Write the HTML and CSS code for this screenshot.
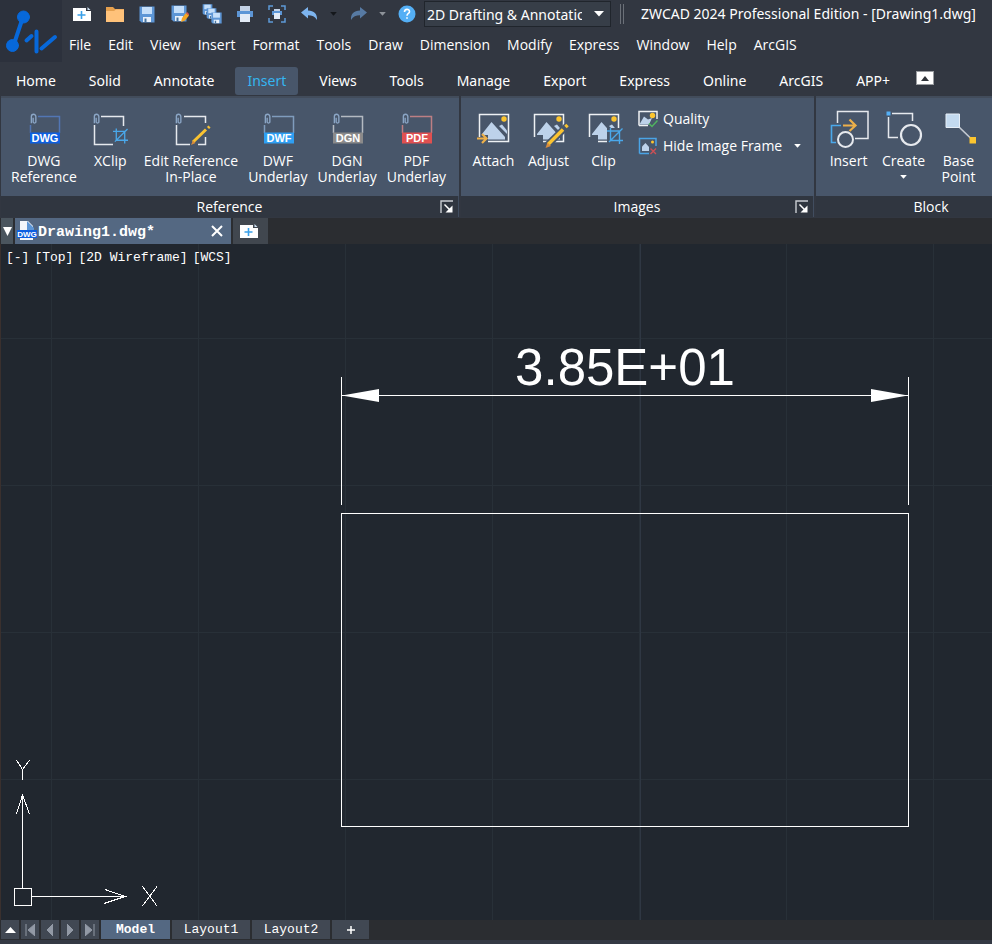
FILE: index.html
```html
<!DOCTYPE html>
<html lang="en">
<head>
<meta charset="utf-8">
<title>ZWCAD 2024 Professional Edition - [Drawing1.dwg]</title>
<link rel="stylesheet" href="styles.css">
</head>
<body>
<svg class="defs" aria-hidden="true">
  <symbol id="clip" viewBox="0 0 10 16"><path d="M1.5 4V11M1.5 5V3.5A2.5 2.5 0 0 1 6.500 3.500V10A1.700 1.700 0 0 1 3.500 10V5" fill="none" stroke="#8ba6c6" stroke-width="1.500"/></symbol>
  <symbol id="crop" viewBox="0 0 16 16"><path d="M3.500 0V12.500H16M0 3H12.500V16M2 14L15.500 .5" fill="none" stroke="#4aa8ea" stroke-width="1.400"/></symbol>
  <symbol id="disk" viewBox="0 0 16 17"><path d="M.5.5H15.500V16.500H2.500L.5 14.500Z" fill="#5d96d6"/><path d="M3 1H13V8H3Z" fill="#c5dffa"/><path d="M4 11H12V16H4Z" fill="#e9f1fb"/><path d="M5.500 12.500H7.500V16H5.500Z" fill="#47749f"/></symbol>
  <symbol id="photo" viewBox="0 0 40 40"><path d="M5.500 27V4.500H34.500V31.500H14" fill="none" stroke="#eef1f4" stroke-width="1.500"/><path d="M8 24L17.500 12L31 27V29.500H14V25H8Z" fill="#bdd2ea"/><path d="M25 16L28 14.500L33 20.500V24Z" fill="#bdd2ea"/><circle cx="30" cy="9" r="2.700" fill="#fcc52f"/></symbol>
  <symbol id="launch" viewBox="0 0 14 14"><path d="M1 13V1H13" fill="none" stroke="#c9cdd2" stroke-width="1.400"/><path d="M4.500 4.500L10 10" stroke="#fff" stroke-width="1.500"/><path d="M12.500 5.500V12.500H5.500Z" fill="#fff"/></symbol>
  <symbol id="down" viewBox="0 0 10 6"><path d="M0 0H10L5 5.500Z" fill="currentColor"/></symbol>
  <symbol id="undo" viewBox="0 0 18 14"><path d="M0 5.500L7 0V3.500C13 3.500 16.500 7 16 13C14 9.500 11 8.300 7 8.300V11.500Z" fill="currentColor"/></symbol>
  <symbol id="sheet" viewBox="0 0 18 14"><path d="M0 1H13V4H18V14H0Z" fill="#fff"/><path d="M14.500 0L17.500 3H14.500Z" fill="#cfe3f5"/><path d="M8.500 4V12M4.500 8H12.500" stroke="#3aa0e8" stroke-width="1.600"/></symbol>
</svg>

<div class="app">
  <header class="top">
    <svg class="logo" viewBox="0 0 62 62" aria-label="ZWCAD">
      <g fill="#0768da" stroke="#0768da" stroke-linecap="round">
        <circle cx="23.500" cy="17" r="6"/><circle cx="12.500" cy="45.500" r="6"/>
        <path d="M23 17L14 44M26.500 40.500L31.500 36M36.500 31.500V51.500M41.500 48.500L55 37" fill="none" stroke-width="4"/>
      </g>
    </svg>
    <div class="top-rows">
      <div class="title-row">
        <div class="quick main">
          <button aria-label="New"><svg width="18" height="14"><use href="#sheet"/></svg></button>
          <button aria-label="Open"><svg width="20" height="18" viewBox="0 0 20 18"><path d="M1 2H8L10 4H19V16H1Z" fill="#e5a04e"/><path d="M1 6H9L11 4.500H19V17H1Z" fill="#ffc27a"/></svg></button>
          <button aria-label="Save"><svg width="16" height="17"><use href="#disk"/></svg></button>
          <button aria-label="Save As"><svg width="18" height="18" viewBox="0 0 18 18"><use href="#disk" width="16" height="17"/><path d="M10 17L11 13L15 8L18 10.500L14 15.500Z" fill="#f5a623"/><path d="M15 8L16 7L18 9V10.500Z" fill="#e0524f"/></svg></button>
          <button aria-label="Save All"><svg width="20" height="20" viewBox="0 0 20 20"><use href="#disk" width="11" height="11"/><use href="#disk" x="4" y="4" width="11" height="11"/><use href="#disk" x="9" y="8" width="11" height="12"/></svg></button>
          <button aria-label="Print"><svg width="18" height="18" viewBox="0 0 18 18"><path d="M4 1H14V6H4Z" fill="#c3d2e6"/><path d="M1 6H17V12H1Z" fill="#5d96d6"/><path d="M4 9H14V17H4Z" fill="#e3ebf6"/></svg></button>
          <button aria-label="Print Preview"><svg width="18" height="18" viewBox="0 0 18 18"><path d="M1 5V1H5M13 1H17V5M17 13V17H13M5 17H1V13" fill="none" stroke="#5d9bd8" stroke-width="1.500"/><path d="M6 4H12V6H6Z" fill="#c3d2e6"/><path d="M4 6H14V10H4Z" fill="#5d96d6"/><path d="M6 8H12V14H6Z" fill="#e3ebf6"/></svg></button>
          <button class="undo" aria-label="Undo"><svg width="18" height="14"><use href="#undo"/></svg></button>
        </div>
        <div class="quick more">
          <button class="dark" aria-label="Undo list"><svg width="7" height="4"><use href="#down"/></svg></button>
          <button class="redo" aria-label="Redo"><svg width="18" height="14" viewBox="0 0 18 14"><path d="M18 5.500L11 0V3.500C5 3.500 1.500 7 2 13C4 9.500 7 8.300 11 8.300V11.500Z" fill="currentColor"/></svg></button>
          <button class="dim" aria-label="Redo list"><svg width="7" height="4"><use href="#down"/></svg></button>
          <button aria-label="Help"><svg width="18" height="18" viewBox="0 0 18 18"><circle cx="9" cy="9" r="8.500" fill="#54aff5"/><path d="M6.500 7C6.500 3.500 11.500 3.500 11.500 6.700C11.500 8.500 9 8.500 9 10.800M9 12.300V13.800" fill="none" stroke="#fff" stroke-width="1.600"/></svg></button>
        </div>
        <div class="combo">
          <select aria-label="Workspace"><option>2D Drafting &amp; Annotation</option></select>
          <svg width="10" height="6"><use href="#down"/></svg>
        </div>
        <span class="grip"></span>
        <h1>ZWCAD 2024 Professional Edition - [Drawing1.dwg]</h1>
      </div>
      <nav class="menu" aria-label="Menu">
        <a href="#">File</a><a href="#">Edit</a><a href="#">View</a><a href="#">Insert</a><a href="#">Format</a><a href="#">Tools</a><a href="#">Draw</a><a href="#">Dimension</a><a href="#">Modify</a><a href="#">Express</a><a href="#">Window</a><a href="#">Help</a><a href="#">ArcGIS</a>
      </nav>
    </div>
  </header>

  <nav class="tabs" aria-label="Ribbon tabs">
    <a href="#">Home</a><a href="#">Solid</a><a href="#">Annotate</a><a href="#" class="active">Insert</a><a href="#">Views</a><a href="#">Tools</a><a href="#">Manage</a><a href="#">Export</a><a href="#">Express</a><a href="#">Online</a><a href="#">ArcGIS</a><a href="#">APP+</a>
    <button class="collapse" aria-label="Minimize ribbon"><svg width="8" height="5" viewBox="0 0 8 5"><path d="M0 5L4 0L8 5Z" fill="#30343a"/></svg></button>
  </nav>

  <div class="ribbon">
    <section class="panel reference">
      <div class="tools">
        <button class="tool"><svg viewBox="0 0 40 40"><path d="M14 6.500H35.500V23M6.500 15V23" fill="none" stroke="#5276b4" stroke-width="1.500"/><use href="#clip" x="6" y="3" width="9" height="15"/><path d="M6 22.500H36V33.500H6Z" fill="#0d5fe0"/><text x="21" y="32">DWG</text></svg>DWG<br>Reference</button>
        <button class="tool"><svg viewBox="0 0 40 40"><path d="M11 6.500H33.500V16M4.500 15V34.500H23" fill="none" stroke="#e6e9ee" stroke-width="1.500"/><use href="#clip" x="3" y="3" width="9" height="15"/><use href="#crop" x="23" y="18" width="15" height="16"/></svg>XClip</button>
        <button class="tool"><svg viewBox="0 0 40 40"><path d="M13 6.500H34.500V13M5.500 15V34.500H19M27 34.500H34.500V27" fill="none" stroke="#e6e9ee" stroke-width="1.500"/><use href="#clip" x="4" y="3" width="9" height="15"/><path d="M22 32L35 19.500M37 18L38.500 16.500" stroke="#fac331" stroke-width="3"/><path d="M20 35L22 30.500L24.500 33Z" fill="#d98d3c"/></svg>Edit Reference<br>In-Place</button>
        <button class="tool"><svg viewBox="0 0 40 40"><path d="M14 6.500H35.500V23M6.500 15V23" fill="none" stroke="#7f9cbd" stroke-width="1.500"/><use href="#clip" x="6" y="3" width="9" height="15"/><path d="M6 22.500H36V33.500H6Z" fill="#2f9ff3"/><text x="21" y="32">DWF</text></svg>DWF<br>Underlay</button>
        <button class="tool"><svg viewBox="0 0 40 40"><path d="M14 6.500H35.500V23M6.500 15V23" fill="none" stroke="#b4bac2" stroke-width="1.500"/><use href="#clip" x="6" y="3" width="9" height="15"/><path d="M6 22.500H36V33.500H6Z" fill="#8a8a8a"/><text x="21" y="32">DGN</text></svg>DGN<br>Underlay</button>
        <button class="tool"><svg viewBox="0 0 40 40"><path d="M14 6.500H35.500V23M6.500 15V23" fill="none" stroke="#bd7f84" stroke-width="1.500"/><use href="#clip" x="6" y="3" width="9" height="15"/><path d="M6 22.500H36V33.500H6Z" fill="#e05050"/><text x="21" y="32">PDF</text></svg>PDF<br>Underlay</button>
      </div>
      <footer><span>Reference</span><button aria-label="Reference settings"><svg width="14" height="14"><use href="#launch"/></svg></button></footer>
    </section>
    <section class="panel images">
      <div class="tools">
        <button class="tool"><svg viewBox="0 0 40 40"><use href="#photo"/><path d="M3 28.500H12M8 24L12.500 28.500L8 33" fill="none" stroke="#edb04a" stroke-width="2.200"/></svg>Attach</button>
        <button class="tool"><svg viewBox="0 0 40 40"><use href="#photo"/><path d="M18 35.500L38 16" stroke="#48566a" stroke-width="7"/><path d="M19 34.500L34 19.500M36.500 17L38.500 15" stroke="#fac331" stroke-width="3.500"/><path d="M16.500 38L18.500 32.500L22 36Z" fill="#d98d3c"/></svg>Adjust</button>
        <button class="tool"><svg viewBox="0 0 40 40"><use href="#photo"/><path d="M23 18H39V35H23Z" fill="#48566a"/><use href="#crop" x="23" y="18" width="16" height="16"/></svg>Clip</button>
        <div class="rows">
          <button><svg width="20" height="18" viewBox="0 0 20 18"><path d="M1 15.500V1.500H19V9M1 15.500H10" fill="none" stroke="#eef1f4" stroke-width="1.500"/><path d="M2 13.500L6 6.500L10 9.500L14 8L11 14.500H2Z" fill="#bdd2ea"/><circle cx="14.500" cy="5.500" r="2.700" fill="#fcc52f"/><path d="M11 13.500L14 16.500L19.500 10.500" fill="none" stroke="#50b460" stroke-width="1.500"/></svg>Quality</button>
          <button><svg width="20" height="18" viewBox="0 0 20 18"><path d="M1.500 16.500V1.500H18V9M1.500 16.500H11" fill="none" stroke="#4aa4e6" stroke-width="1.500"/><path d="M4 14V9.500L7.500 6L11 10V14Z" fill="#bdd2ea"/><circle cx="14.500" cy="5" r="1.500" fill="#fcc52f"/><path d="M12.500 11.500L18 17M18 11.500L12.500 17" stroke="#cc5055" stroke-width="1.400"/></svg>Hide Image Frame<svg class="caret" width="7" height="4"><use href="#down"/></svg></button>
        </div>
      </div>
      <footer><span>Images</span><button aria-label="Images settings"><svg width="14" height="14"><use href="#launch"/></svg></button></footer>
    </section>
    <section class="panel block">
      <div class="tools">
        <button class="tool"><svg viewBox="0 0 40 40" fill="none"><path d="M8.500 13V1.500H39V28.500H26" stroke="#e6e9ee" stroke-width="1.500"/><path d="M12 15.500H2.500V32.500H7" stroke="#4aa8ea" stroke-width="1.600"/><path d="M14 15.500H26M20.500 9.500L26.500 15.500L20.500 21" stroke="#edb04a" stroke-width="2.200"/><circle cx="16.500" cy="29.500" r="7.500" stroke="#e6e9ee" stroke-width="2"/></svg>Insert</button>
        <button class="tool"><svg viewBox="0 0 40 40" fill="none"><path d="M8 3.500H28.500V11M4.500 7V27.500H14" stroke="#e6e9ee" stroke-width="1.500"/><path d="M2.500 1.500H6.500V5.500H2.500Z" fill="#54aff5"/><circle cx="27" cy="25" r="10" stroke="#e6e9ee" stroke-width="2.200"/></svg>Create<svg class="caret" width="7" height="4"><use href="#down"/></svg></button>
        <button class="tool"><svg viewBox="0 0 40 40"><path d="M20 17L33 29.500" stroke="#c3c9d1" stroke-width="1.700"/><path d="M7 4H20.500V17.500H7Z" fill="#c3daf0" stroke="#e6eef7"/><path d="M30.500 27H37V33.500H30.500Z" fill="#fcc52f"/></svg>Base<br>Point</button>
      </div>
      <footer><span>Block</span></footer>
    </section>
  </div>

  <div class="docs">
    <button class="doc-list" aria-label="Documents"><svg width="9" height="9" viewBox="0 0 9 9"><path d="M0 0H9L4.500 9Z" fill="#fff"/></svg></button>
    <div class="doc">
      <svg width="20" height="20" viewBox="0 0 20 20"><path d="M3 0H11L16 5V19H3Z" fill="#f2f6fb"/><path d="M10 0L17 7V9H10Z" fill="#5d96d6"/><path d="M0 9H20V17H0Z" fill="#0d5fe0"/><text x="10" y="16">DWG</text></svg>
      <a href="#">Drawing1.dwg*</a>
      <button aria-label="Close"><svg width="12" height="12" viewBox="0 0 12 12"><path d="M1 1L11 11M11 1L1 11" stroke="#fff" stroke-width="2"/></svg></button>
    </div>
    <button class="doc-new" aria-label="New drawing"><svg width="18" height="14"><use href="#sheet"/></svg></button>
  </div>

  <main class="canvas">
    <svg class="drawing" aria-label="Drawing">
      <defs><pattern id="grid" x="50" y="94" width="147" height="147" patternUnits="userSpaceOnUse"><path d="M.5 0V147M0 .5H147" stroke="#283038"/></pattern></defs>
      <rect width="100%" height="100%" fill="url(#grid)"/>
      <path d="M639.500 0V700" stroke="#2f3743"/>
      <g fill="none" stroke="#fff" shape-rendering="crispEdges">
        <path d="M340.500 133V261M907.500 133V261M341 151.500H907M340.500 269.500H907.500V582.500H340.500Z"/>
        <path d="M13.500 644.500H30.500V661.500H13.500ZM21.500 644V551M31 652.500H124M15.500 570L21.500 551L28.500 570M104 645.500L124 652.500L103 659.500M15.500 516L21.500 525.500L28.500 516M21.500 525V536M141.500 642.500L156 662M156 642.500L141.500 662"/>
      </g>
      <path d="M341 151.500L378 145V158ZM907 151.500L870 145V158Z" fill="#fff"/>
      <text x="624" y="141">3.85E+01</text>
    </svg>
    <div class="viewport">
      <button>[-]</button><button>[Top]</button><button>[2D Wireframe]</button><button>[WCS]</button>
    </div>
  </main>

  <nav class="layouts" aria-label="Layouts">
    <button class="nav" aria-label="Layout list"><svg width="11" height="6" viewBox="0 0 11 6"><path d="M0 6L5.500 0L11 6Z" fill="#fff"/></svg></button>
    <button class="nav" aria-label="First"><svg width="10" height="12" viewBox="0 0 10 12"><path d="M1 0V12M10 0V12L3 6Z"/></svg></button>
    <button class="nav" aria-label="Previous"><svg width="6" height="12" viewBox="0 0 6 12"><path d="M6 0V12L0 6Z"/></svg></button>
    <button class="nav" aria-label="Next"><svg width="6" height="12" viewBox="0 0 6 12"><path d="M0 0V12L6 6Z"/></svg></button>
    <button class="nav" aria-label="Last"><svg width="10" height="12" viewBox="0 0 10 12"><path d="M9 0V12M0 0V12L7 6Z"/></svg></button>
    <a href="#" class="active">Model</a><a href="#">Layout1</a><a href="#">Layout2</a>
    <button class="add" aria-label="New layout"><svg width="8" height="8" viewBox="0 0 8 8"><path d="M4 0V8M0 4H8" stroke="#fff" stroke-width="1.500"/></svg></button>
  </nav>
</div>
</body>
</html>
```
FILE: styles.css
```css
* { box-sizing: border-box; }

body {
  margin: 0;
  background: #323741;
  color: #fff;
  font: 14px/16px "Open Sans", "Noto Sans", sans-serif;
}

button {
  margin: 0;
  padding: 0;
  border: 0;
  background: none;
  color: inherit;
  font: inherit;
}

a { color: inherit; text-decoration: none; }
svg { flex: none; }
.defs { position: absolute; width: 0; height: 0; }

.app {
  display: flex;
  flex-direction: column;
  height: 100vh;
  overflow: hidden;
  white-space: nowrap;
}

/* Title and menu */
.top { display: flex; }
.logo { width: 62px; height: 62px; background: #2c313c; }
.top-rows { flex: 1; min-width: 0; }
.title-row { display: flex; align-items: center; height: 28px; }

.quick { display: flex; align-items: center; justify-content: space-between; }
.quick button { display: flex; justify-content: center; }
.quick.main { width: 248px; margin-left: 10px; }
.quick.main button { width: 20px; }
.quick.more { width: 86px; margin-left: 10px; }
.undo { color: #7db4ee; }
.redo { color: #577aa3; }
.quick .dark { color: #14171b; }
.quick .dim { color: #8d9299; }

.combo {
  position: relative;
  width: 187px;
  height: 26px;
  margin-left: 8px;
  border: 1px solid #20252c;
  background: #373e48;
}
.combo select {
  width: 100%;
  height: 100%;
  padding: 0 28px 0 2px;
  border: 0;
  background: none;
  color: #fff;
  font-family: "Noto Sans", sans-serif;
  font-size: 14px;
  appearance: none;
}
.combo svg { position: absolute; top: 9px; right: 6px; pointer-events: none; }

.grip {
  width: 4px;
  height: 20px;
  margin: 0 17px 0 9px;
  border: solid #6b7078;
  border-width: 0 1px;
}
h1 { margin: 0; font: 14px/16px "Noto Sans", sans-serif; }

.menu { display: flex; gap: 17px; padding: 0 7px; line-height: 34px; }

/* Ribbon tabs */
.tabs {
  display: flex;
  align-items: center;
  gap: 9px;
  height: 34px;
  padding: 3px 4px 0;
  font-family: "Noto Sans", sans-serif;
}
.tabs a { padding: 0 12px; line-height: 28px; border-radius: 3px; }
.tabs .active { background: #48566a; color: #35b5f0; }
.collapse {
  display: flex;
  align-items: center;
  justify-content: center;
  width: 18px;
  height: 14px;
  margin: 0 0 5px 5px;
  border: 1px solid #9a9da1;
  background: #fff;
}

/* Ribbon */
.ribbon { display: flex; gap: 2px; padding: 0 0 1px 1px; }
.panel { flex: none; border-right: 1px solid #414d5f; }
.reference { width: 458px; }
.images { width: 353px; }
.block { width: 231px; }
.tools {
  display: flex;
  align-items: flex-start;
  height: 100px;
  margin-right: -1px;
  padding: 12px 5px 0;
  background: #48566a;
  border-top: 2px solid #424c5b;
}
.tool { min-width: 55px; padding: 0 5px; text-align: center; }
.tool > svg { display: block; width: 40px; height: 40px; margin: 0 auto 3px; }
.tool text { fill: #fff; font: bold 11px "Liberation Sans", sans-serif; text-anchor: middle; }
.tool .caret { width: 7px; height: 4px; margin-top: 6px; }
.reference .tool:nth-child(2) { min-width: 57px; }

.rows { padding-left: 7px; margin-top: -5px; }
.rows button { display: flex; align-items: center; gap: 5px; height: 27px; }
.rows .caret { margin-left: 7px; }

.panel footer {
  display: flex;
  align-items: center;
  height: 21px;
  padding: 0 4px;
  background: #303640;
}
.panel footer span { flex: 1; text-align: center; }
.panel footer button { display: flex; width: 14px; }
.reference span, .images span { padding-left: 14px; }

/* Document tabs */
.docs { display: flex; gap: 2px; height: 26px; padding-left: 1px; background: #2b2d31; }
.docs button { display: flex; align-items: center; justify-content: center; }
.doc-list { width: 12px; background: #4a555e; }
.doc {
  display: flex;
  align-items: center;
  gap: 1px;
  width: 216px;
  padding: 0 8px 0 2px;
  background: #546882;
  font: bold 15px/16px "Liberation Mono", monospace;
}
.doc a { flex: 1; padding-top: 3px; }
.doc text { fill: #fff; font: bold 8px "Liberation Sans", sans-serif; text-anchor: middle; }
.docs .doc-new { width: 35px; padding-right: 3px; background: #41474f; }

/* Drawing area */
.canvas {
  position: relative;
  flex: 1;
  min-height: 0;
  border-left: 1px solid #3a302e;
  background: #21272f;
}
.drawing { position: absolute; inset: 0; width: 100%; height: 100%; }
.drawing text { fill: #fff; font: 51px "Liberation Sans", Arial, sans-serif; text-anchor: middle; }
.viewport {
  position: relative;
  display: flex;
  gap: 5px;
  padding: 6px 5px;
  font: 13px/16px "Liberation Mono", monospace;
}

/* Layout tabs */
.layouts {
  display: flex;
  gap: 2px;
  padding: 0 1px 1px;
  background: #2b2d31;
  border-bottom: 4px solid #343944;
  font: 13px/19px "Liberation Mono", monospace;
}
.layouts > * { background: #414853; text-align: center; }
.layouts a { width: 78px; }
.layouts .active { width: 69px; background: #546882; font-weight: 700; }
.layouts button { display: flex; align-items: center; justify-content: center; }
.nav { width: 18px; }
.nav path { fill: #9299a5; stroke: #9299a5; stroke-width: 1px; }
.nav:first-child path { fill: #fff; stroke: none; }
.add { width: 37px; }
```
